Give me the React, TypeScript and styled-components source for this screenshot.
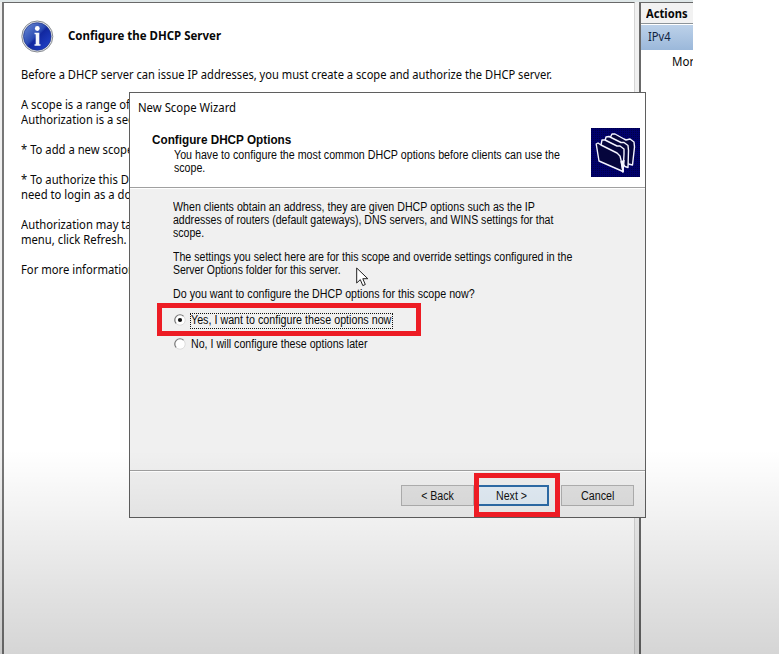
import React from 'react';
import styled, { createGlobalStyle, css } from 'styled-components';

const GlobalStyle = createGlobalStyle`
  *, *::before, *::after { box-sizing: border-box; }
  html, body { margin: 0; padding: 0; overflow: hidden; }
  body { background: #fff; color: #080808; }
`;

const segoe = css`font-family: "Noto Sans", "Open Sans", sans-serif; font-size: 12px;`;
const sans = css`font-family: "Liberation Sans", Arial, sans-serif; font-size: 12px;`;

const Screen = styled.div`
  position: relative;
  width: 779px;
  height: 654px;
  padding-top: 2px;
  display: flex;
  overflow: hidden;
  background: linear-gradient(#dfe7e8, #dfe7e8) 0 0 / 693px 2px no-repeat #fff;
  ${segoe}
`;

const Gutter = styled.div<{ $w: number }>`
  flex: 0 0 ${p => p.$w}px;
  background: #f0f0f0;
`;

const Overview = styled.main`
  flex: 0 0 633px;
  border: solid #696969;
  border-width: 1px 1px 0 2px;
  border-right-color: #d5d5d5;
  border-left-color: #777;
  padding: 16px 0 0 17px;
  background: #fff;
`;

const Heading = styled.header`
  display: flex;
  align-items: center;
  gap: 14px;
  height: 34px;
  margin-bottom: 14px;
`;

const Paragraph = styled.p`
  margin: 0 0 15px;
  line-height: 15px;
`;

const Line = styled.span<{ $sx?: number; $bold?: boolean; $center?: boolean }>`
  display: block;
  width: max-content;
  white-space: nowrap;
  font-weight: ${p => (p.$bold ? 700 : 400)};
  transform: scaleX(${p => p.$sx ?? 0.885});
  transform-origin: ${p => (p.$center ? 'center' : 'left')};
`;

const HeadingLine = styled(Line)`
  margin-top: -2px;
`;

const Actions = styled.aside`
  flex: 0 0 54px;
  border: solid #696969;
  border-width: 1px 0 0 2px;
  overflow: hidden;
  background: #fff;
`;

const ActionsTitle = styled.div`
  height: 21px;
  padding-left: 5px;
  line-height: 22px;
  background: #f2f2f2;
  border-bottom: 1px solid #8d9499;
`;

const ActionsGroup = styled.div`
  height: 25px;
  margin-top: 1px;
  padding-left: 7px;
  line-height: 24px;
  background: linear-gradient(#bcd1e9, #9bb8da);
  color: #10243f;
`;

const ActionsItem = styled.div`
  padding-left: 31px;
  line-height: 23px;
`;

const Dialog = styled.section`
  position: absolute;
  left: 129px;
  top: 92px;
  width: 517px;
  height: 426px;
  display: flex;
  flex-direction: column;
  border: 1px solid #5f5f5f;
  background: #f0f0f0;
  ${sans}
`;

const TitleBar = styled.div`
  height: 30px;
  padding-left: 8px;
  line-height: 29px;
  background: #fff;
  ${segoe}
`;

const Banner = styled.div`
  display: flex;
  justify-content: space-between;
  height: 65px;
  padding: 5px 5px 0 22px;
  background: #fff;
  border-bottom: 1px solid #a0a0a0;
  box-shadow: 0 1px #fff;
`;

const BannerCopy = styled.div`
  flex: 1;
  min-width: 0;
`;

const BannerTitle = styled.div`
  line-height: 14px;
  padding-top: 5px;
`;

const BannerText = styled.div`
  padding: 2px 0 0 22px;
  line-height: 13px;
`;

const Folders = styled.svg`
  flex: none;
`;

const Content = styled.div`
  flex: 1;
  padding: 13px 0 0 43px;
  line-height: 13px;
`;

const Block = styled.div<{ $gap: number }>`
  margin-bottom: ${p => p.$gap}px;
`;

const Option = styled.label`
  display: flex;
  align-items: center;
  gap: 5px;
  height: 16px;
  margin-bottom: 8px;
`;

const OptionText = styled.span<{ $focused?: boolean }>`
  width: 203px;
  height: 16px;
  padding-left: 1px;
  line-height: 15px;
  outline: ${p => (p.$focused ? '1px dotted #111' : 'none')};
  outline-offset: -1px;
`;

const RadioMark = styled.svg`
  margin: 0 -1px 2px 1px;
`;

const Footer = styled.footer`
  height: 47px;
  border-top: 1px solid #a0a0a0;
  box-shadow: inset 0 1px #fff;
  display: flex;
  justify-content: flex-end;
  padding: 14px 11px 0 0;
`;

const Button = styled.button<{ $primary?: boolean; $gap?: number }>`
  display: flex;
  align-items: center;
  justify-content: center;
  width: ${p => (p.$primary ? 75 : 73)}px;
  height: 21px;
  margin: 0 ${p => p.$gap ?? 0}px 0 0;
  padding: 0;
  color: #111;
  background: ${p => (p.$primary ? '#e3edf6' : '#e1e1e1')};
  border: ${p => (p.$primary ? '2px solid #2e6ca8' : '1px solid #b0b0b0')};
  ${sans}
`;

const Shade = styled.div`
  position: absolute;
  inset: 450px 0 0;
  background: linear-gradient(rgba(0, 0, 0, 0), rgba(0, 0, 0, 0.165));
  pointer-events: none;
`;

const Highlight = styled.div<{ $x: number; $y: number; $w: number; $h: number }>`
  position: absolute;
  left: ${p => p.$x}px;
  top: ${p => p.$y}px;
  width: ${p => p.$w}px;
  height: ${p => p.$h}px;
  border: 5px solid #ed1c24;
`;

const Pointer = styled.svg`
  position: absolute;
  left: 356px;
  top: 267px;
`;

const InfoIcon = () => (
  <svg width="33" height="33" viewBox="0 0 33 33">
    <defs>
      <linearGradient id="ball" x1="0" y1="0" x2="1" y2="1">
        <stop offset="0" stopColor="#6f8fd6" />
        <stop offset="0.45" stopColor="#2c4cb4" />
        <stop offset="0.52" stopColor="#1228a0" />
        <stop offset="1" stopColor="#2448d0" />
      </linearGradient>
    </defs>
    <circle cx="16.3" cy="16.5" r="15.5" fill="#e4e6ea" stroke="#85898f" />
    <circle cx="16.3" cy="16.5" r="13.8" fill="url(#ball)" stroke="#1d3389" strokeWidth=".7" />
    <circle cx="16.300" cy="8.500" r="2.400" fill="#fff" />
    <path d="M13.500 12.800h4.800v11.400h1.200v1.500h-6V24.200h1.200v-9.900h-1.200z" fill="#f4f6fb" />
  </svg>
);

const FoldersIcon = () => (
  <Folders width="49" height="49" viewBox="0 0 49 49">
    <defs>
      <pattern id="dither" width="2" height="2" patternUnits="userSpaceOnUse">
        <rect width="2" height="2" fill="#00006c" />
        <rect width="1" height="1" fill="#000048" />
      </pattern>
    </defs>
    <rect width="49" height="49" fill="url(#dither)" />
    <g fill="#05053c" stroke="#f4f4ff" strokeWidth="1.400" strokeLinejoin="round">
      <path d="M19 10 21 6l3 0 9 5 2 1 4-1 4 3 .5 5-2 18-4-1z" />
      <path d="M14 13 15 9l3-.5 10 5 2 1 3 0 4 3 .5 5-.5 17-3-1z" />
      <path d="M10 17 11 12l3 0 10 5 2 1 3 0 4 3 0 5-1 18-4-5z" />
      <path d="M8 33 5.200 16 7 15l3 2 16 8 3 3 1 4 2 11.500z" />
      <path d="m30 33 2 10.500 1-11.500" fill="#f4f4ff" />
    </g>
  </Folders>
);

const Radio = ({ checked = false }: { checked?: boolean }) => (
  <RadioMark width="12" height="12" viewBox="0 0 12 12">
    <circle cx="6" cy="6" r="5" fill="#fff" />
    <path d="M2.300 9.700A5.200 5.200 0 0 1 9.700 2.300" fill="none" stroke="#777" strokeWidth="1.200" />
    <path d="M9.700 2.300A5.200 5.200 0 0 1 2.300 9.700" fill="none" stroke="#dedede" />
    {checked && <circle cx="6" cy="6" r="2.100" fill="#111" />}
  </RadioMark>
);

const overview = [
  ['Before a DHCP server can issue IP addresses, you must create a scope and authorize the DHCP server.'],
  ['A scope is a range of', 'Authorization is a sec'],
  ['* To add a new scope'],
  ['* To authorize this DH', 'need to login as a do'],
  ['Authorization may ta', 'menu, click Refresh.'],
  ['For more information'],
];

const blocks: { gap: number; lines: [string, number][] }[] = [
  { gap: 11, lines: [
    ['When clients obtain an address, they are given DHCP options such as the IP', 0.887],
    ['addresses of routers (default gateways), DNS servers, and WINS settings for that', 0.88],
    ['scope.', 0.88],
  ] },
  { gap: 11, lines: [
    ['The settings you select here are for this scope and override settings configured in the', 0.883],
    ['Server Options folder for this server.', 0.873],
  ] },
  { gap: 12, lines: [['Do you want to configure the DHCP options for this scope now?', 0.891]] },
];

export default function App() {
  return (
    <>
      <GlobalStyle />
      <Screen>
        <Gutter $w={2} />
        <Overview>
          <Heading><InfoIcon /><HeadingLine $bold $sx={0.956}>Configure the DHCP Server</HeadingLine></Heading>
          {overview.map(p => (
            <Paragraph key={p[0]}>
              {p.map(t => <Line key={t} $sx={t.length > 40 ? 0.928 : 0.938}>{t}</Line>)}
            </Paragraph>
          ))}
        </Overview>
        <Gutter $w={4} />
        <Actions>
          <ActionsTitle><Line $bold $sx={0.93}>Actions</Line></ActionsTitle>
          <ActionsGroup><Line $sx={0.93}>IPv4</Line></ActionsGroup>
          <ActionsItem><Line $sx={0.96}>Mor</Line></ActionsItem>
        </Actions>
        <Dialog>
          <TitleBar><Line $sx={0.945}>New Scope Wizard</Line></TitleBar>
          <Banner>
            <BannerCopy>
              <BannerTitle><Line $bold $sx={0.978}>Configure DHCP Options</Line></BannerTitle>
              <BannerText>
                <Line $sx={0.89}>You have to configure the most common DHCP options before clients can use the</Line>
                <Line>scope.</Line>
              </BannerText>
            </BannerCopy>
            <FoldersIcon />
          </Banner>
          <Content>
            {blocks.map((b, i) => (
              <Block key={i} $gap={b.gap}>
                {b.lines.map(([t, sx]) => <Line key={t} $sx={sx}>{t}</Line>)}
              </Block>
            ))}
            <Option>
              <Radio checked />
              <OptionText $focused><Line $sx={0.893}>Yes, I want to configure these options now</Line></OptionText>
            </Option>
            <Option>
              <Radio />
              <OptionText><Line>No, I will configure these options later</Line></OptionText>
            </Option>
          </Content>
          <Footer>
            <Button><Line $center>&lt; Back</Line></Button>
            <Button $primary $gap={12}><Line $center>Next &gt;</Line></Button>
            <Button><Line $center $sx={0.895}>Cancel</Line></Button>
          </Footer>
        </Dialog>
        <Pointer width="14" height="20" viewBox="0 0 14 20">
          <path d="M.7 1v15l3.600-3.400 2.500 6 2.500-1.100-2.500-5.800h5z" fill="#fff" stroke="#222" />
        </Pointer>
        <Shade />
        <Highlight $x={157} $y={303} $w={264} $h={33} />
        <Highlight $x={474} $y={473} $w={86} $h={44} />
      </Screen>
    </>
  );
}
